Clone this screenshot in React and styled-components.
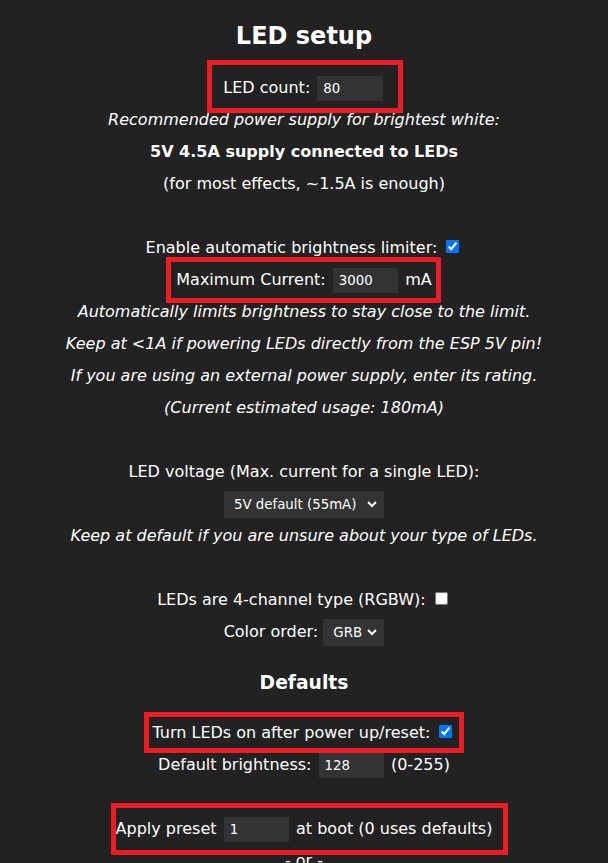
import React from "react";
import styled, { createGlobalStyle } from "styled-components";

const GlobalStyle = createGlobalStyle`
  html, body {
    margin: 0;
    background: #222;
  }
  body {
    font-family: Verdana, "DejaVu Sans", sans-serif;
    font-size: 16px;
    color: #fff;
  }
`;

const Page = styled.div`
  text-align: center;
  line-height: 32px;
  padding-top: 1px;
  overflow: hidden;
`;

const Title = styled.h2`
  font-size: 24px;
  margin: 19px 0 20px;
`;

const Section = styled.h3`
  font-size: 18.72px;
  margin: 18.72px 0;
`;

const Line = styled.div`
  min-height: 32px;
  font-style: ${(p) => (p.$italic ? "italic" : "normal")};
  font-weight: ${(p) => (p.$bold ? "bold" : "normal")};
`;

const Spacer = styled.div`
  height: 32px;
`;

// red annotation frame drawn over a line
const Mark = styled.span`
  position: relative;
  display: inline-block;
  line-height: 32px;
  &::after {
    content: "";
    position: absolute;
    top: ${(p) => p.$t}px;
    bottom: ${(p) => p.$b}px;
    left: ${(p) => p.$l}px;
    right: ${(p) => p.$r}px;
    border: 5px solid #ed1c24;
    pointer-events: none;
  }
`;

const NumInput = styled.input.attrs({ type: "number" })`
  background: #333;
  color: #fff;
  font-family: Verdana, "DejaVu Sans", sans-serif;
  font-size: 13.33px;
  border: 0.5ch solid #333;
  width: 4em;
  margin: 2px;
  padding: 1px 2px;
  outline: none;
`;

const Select = styled.select`
  background: #333;
  color: #fff;
  font-family: Verdana, "DejaVu Sans", sans-serif;
  font-size: 13.33px;
  border: 0.5ch solid #333;
  padding: 1px 2px;
  outline: none;
`;

const Check = styled.input.attrs({ type: "checkbox" })`
  margin: 3px 3px 3px 4px;
`;

export default function App() {
  return (
    <>
      <GlobalStyle />
      <Page>
        <Title>LED setup</Title>
        <Line>
          <Mark $t={-12} $b={-9} $l={-16} $r={-18}>
            LED count: <NumInput defaultValue={80} />
          </Mark>
        </Line>
        <Line $italic>Recommended power supply for brightest white:</Line>
        <Line $bold>5V 4.5A supply connected to LEDs</Line>
        <Line>(for most effects, ~1.5A is enough)</Line>
        <Spacer />
        <Line>
          Enable automatic brightness limiter: <Check defaultChecked />
        </Line>
        <Line>
          <Mark $t={-7} $b={-7} $l={-10} $r={-9}>
            Maximum Current: <NumInput defaultValue={3000} /> mA
          </Mark>
        </Line>
        <Line $italic>Automatically limits brightness to stay close to the limit.</Line>
        <Line $italic>Keep at &lt;1A if powering LEDs directly from the ESP 5V pin!</Line>
        <Line $italic>If you are using an external power supply, enter its rating.</Line>
        <Line $italic>(Current estimated usage: 180mA)</Line>
        <Spacer />
        <Line>LED voltage (Max. current for a single LED):</Line>
        <Line>
          <Select defaultValue="55">
            <option value="55">5V default (55mA)</option>
            <option value="35">5V ws2815 (12mA)</option>
            <option value="30">12V (30mA)</option>
            <option value="255">WS2815 (12mA)</option>
            <option value="0">Custom</option>
          </Select>
        </Line>
        <Line $italic>Keep at default if you are unsure about your type of LEDs.</Line>
        <Spacer />
        <Line>
          LEDs are 4-channel type (RGBW): <Check />
        </Line>
        <Line>
          Color order:{" "}
          <Select defaultValue="0">
            <option value="0">GRB</option>
            <option value="1">RGB</option>
            <option value="2">BRG</option>
            <option value="3">RBG</option>
          </Select>
        </Line>
        <Section>Defaults</Section>
        <Line>
          <Mark $t={-5} $b={-4} $l={-9} $r={-9}>
            Turn LEDs on after power up/reset: <Check defaultChecked />
          </Mark>
        </Line>
        <Line>
          Default brightness: <NumInput defaultValue={128} /> (0-255)
        </Line>
        <Spacer />
        <Line>
          <Mark $t={-10} $b={-10} $l={-5} $r={-16}>
            Apply preset <NumInput defaultValue={1} /> at boot (0 uses defaults)
          </Mark>
        </Line>
        <Line>- or -</Line>
      </Page>
    </>
  );
}
